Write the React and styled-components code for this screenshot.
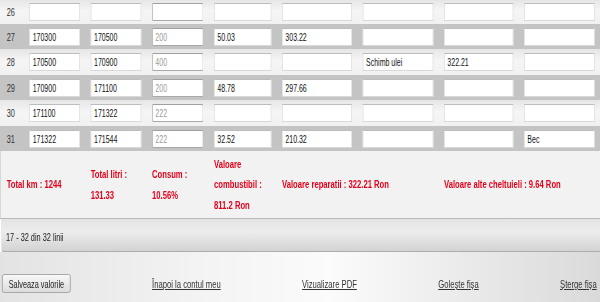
import React from 'react';
import styled, { createGlobalStyle } from 'styled-components';

const GlobalStyle = createGlobalStyle`
  html, body { margin: 0; padding: 0; background: #fff; overflow: hidden; }
  body { font-family: "Liberation Sans", Arial, sans-serif; }
`;

const COLS = '36px 92px 92px 93px 102px 121px 122px 120px 122px';

const Stage = styled.div`
  width: 900px;
  transform: scaleX(0.6667);
  transform-origin: 0 0;
  font-family: "Liberation Sans", Arial, sans-serif;
`;

const Row = styled.div`
  display: grid;
  grid-template-columns: ${COLS};
  align-items: center;
  height: ${(p) => p.$h}px;
  background: ${(p) =>
    p.$alt ? '#c4c4c4' : 'linear-gradient(#e6e6e6, #f5f5f5 45%, #f1f1f1)'};
`;

const NumCell = styled.div`
  padding-left: 10px;
  font-size: 11px;
  color: #333;
`;

const Cell = styled.div`
  padding: 0 8px;
  display: flex;
  align-items: center;
`;

const Field = styled.input`
  width: 100%;
  box-sizing: border-box;
  height: 18px;
  margin: 0;
  padding: 0 4px;
  font-family: "Liberation Sans", Arial, sans-serif;
  font-size: 10.5px;
  color: ${(p) => (p.$muted ? '#9a9a9a' : '#111')};
  background: #fff;
  border: 1px solid ${(p) => (p.$muted ? '#a8a8a8' : '#d8d8d8')};
  border-top-color: ${(p) => (p.$muted ? '#a0a0a0' : '#bcbcbc')};
  border-radius: ${(p) => (p.$muted ? '2px' : '0')};
  outline: none;
`;

const Summary = styled.div`
  display: grid;
  grid-template-columns: ${COLS};
  align-items: center;
  height: 68px;
  box-sizing: border-box;
  background: #f2f2f2;
  border-bottom: 1px solid #b9b9b9;
  box-shadow: inset 1px 0 #cacaca;
`;

const Stat = styled.div`
  grid-column: span ${(p) => p.$span || 1};
  padding-left: ${(p) => (p.$first ? '10px' : '8px')};
  color: #e2001b;
  font-weight: bold;
  font-size: 11.5px;
  line-height: 20.5px;
`;

const Pager = styled.div`
  height: 33px;
  box-sizing: border-box;
  margin-left: 2px;
  display: flex;
  align-items: center;
  padding: 3px 0 0 6px;
  font-size: 11px;
  color: #222;
  background: linear-gradient(#e4e4e4, #ececec 40%, #d3d3d3);
  border-left: 1px solid #b4b4b4;
  border-bottom: 1px solid #adadad;
  border-bottom-left-radius: 3px;
`;

const Footer = styled.div`
  display: flex;
  justify-content: space-between;
  align-items: center;
  padding: 22px 5px 10px 3px;
  background: linear-gradient(90deg, #e3e3e3 0%, #f4f4f4 35%, #fbfbfb 55%, #dadada 100%);
`;

const SaveButton = styled.button`
  height: 19px;
  padding: 0 9px;
  font-family: "Liberation Sans", Arial, sans-serif;
  font-size: 11px;
  color: #222;
  border: 1px solid #9c9c9c;
  border-radius: 3px;
  background: linear-gradient(#f8f8f8, #dcdcdc);
  cursor: pointer;
`;

const Link = styled.a`
  font-size: 11.5px;
  color: #333;
  text-decoration: underline;
  cursor: pointer;
`;

const rows = [
  { n: 26, h: 24, v: ['', '', '', '', '', '', '', ''] },
  { n: 27, h: 25, v: ['170300', '170500', '200', '50.03', '303.22', '', '', ''] },
  { n: 28, h: 26, v: ['170500', '170900', '400', '', '', 'Schimb ulei', '322.21', ''] },
  { n: 29, h: 25, v: ['170900', '171100', '200', '48.78', '297.66', '', '', ''] },
  { n: 30, h: 26, v: ['171100', '171322', '222', '', '', '', '', ''] },
  { n: 31, h: 25, v: ['171322', '171544', '222', '32.52', '210.32', '', '', 'Bec'] },
];

export default function App() {
  return (
    <>
      <GlobalStyle />
      <Stage>
        {rows.map((r) => (
          <Row key={r.n} $h={r.h} $alt={r.n % 2 === 1}>
            <NumCell>{r.n}</NumCell>
            {r.v.map((val, i) => (
              <Cell key={i}>
                <Field type="text" defaultValue={val} $muted={i === 2} readOnly={i === 2} />
              </Cell>
            ))}
          </Row>
        ))}
        <Summary>
          <Stat $span={2} $first>Total km : 1244</Stat>
          <Stat>Total litri :<br />131.33</Stat>
          <Stat>Consum :<br />10.56%</Stat>
          <Stat>Valoare<br />combustibil :<br />811.2 Ron</Stat>
          <Stat $span={2}>Valoare reparatii : 322.21 Ron</Stat>
          <Stat $span={2}>Valoare alte cheltuieli : 9.64 Ron</Stat>
        </Summary>
        <Pager>17 - 32 din 32 linii</Pager>
        <Footer>
          <SaveButton type="button">Salveaza valorile</SaveButton>
          <Link>Înapoi la contul meu</Link>
          <Link>Vizualizare PDF</Link>
          <Link>Golește fișa</Link>
          <Link>Șterge fișa</Link>
        </Footer>
      </Stage>
    </>
  );
}
